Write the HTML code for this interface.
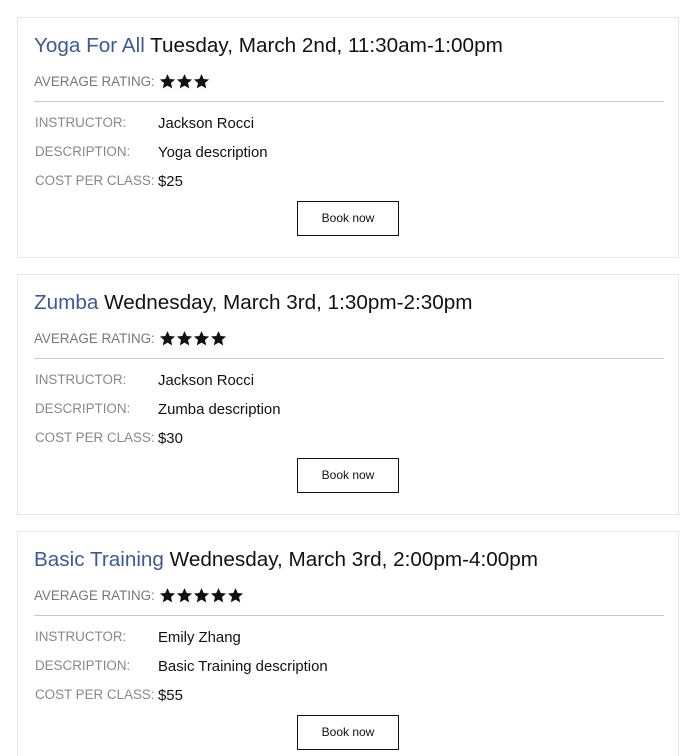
<!DOCTYPE html>
<html><head><meta charset="utf-8"><style>
*{margin:0;padding:0;box-sizing:border-box}
html,body{width:695px;height:756px;overflow:hidden}
body{background:#fff;font-family:"Liberation Sans",Arial,sans-serif;position:relative}
.card{position:absolute;left:17px;width:662px;height:241px;border:1px solid #e6e6e6}
.t{position:absolute;left:16px;top:16px;font-size:20.7px;color:#111;white-space:nowrap}
.t span{color:#3d5a98}
.r{position:absolute;left:16px;top:55px;font-size:13.4px;color:#777;display:flex;align-items:center}
.r svg{margin-left:4px}
.hr{position:absolute;left:16px;width:630px;top:83px;border-top:1px solid #c8c8c8}
.l{position:absolute;left:17px;font-size:13.4px;color:#888}
.v{position:absolute;left:140px;font-size:14.9px;color:#111}
.b{position:absolute;left:279px;top:183px;width:102px;height:35px;border:1px solid #111;font-size:12px;color:#111;text-align:center;line-height:33px}
</style></head><body>

<svg width="0" height="0" style="position:absolute"><defs><symbol id="s" viewBox="0 0 24 24"><path d="M12 1.5l3.1 7 7.6.7-5.8 5 1.8 7.5L12 17.8l-6.7 3.9 1.8-7.5-5.8-5 7.6-.7z" fill="#111"/></symbol></defs></svg>

<div class="card" style="top:17px">
<div class="t"><span>Yoga For All</span> Tuesday, March 2nd, 11:30am-1:00pm</div>
<div class="r">AVERAGE RATING:<svg width="51" height="17"><use href="#s" x="0" width="17" height="17"/><use href="#s" x="17" width="17" height="17"/><use href="#s" x="34" width="17" height="17"/></svg></div>
<div class="hr"></div>
<div class="l" style="top:97px">INSTRUCTOR:</div><div class="v" style="top:98px">Jackson Rocci</div>
<div class="l" style="top:126px">DESCRIPTION:</div><div class="v" style="top:127px">Yoga description</div>
<div class="l" style="top:155px">COST PER CLASS:</div><div class="v" style="top:156px">$25</div>
<div class="b">Book now</div>
</div>

<div class="card" style="top:274px">
<div class="t"><span>Zumba</span> Wednesday, March 3rd, 1:30pm-2:30pm</div>
<div class="r">AVERAGE RATING:<svg width="68" height="17"><use href="#s" x="0" width="17" height="17"/><use href="#s" x="17" width="17" height="17"/><use href="#s" x="34" width="17" height="17"/><use href="#s" x="51" width="17" height="17"/></svg></div>
<div class="hr"></div>
<div class="l" style="top:97px">INSTRUCTOR:</div><div class="v" style="top:98px">Jackson Rocci</div>
<div class="l" style="top:126px">DESCRIPTION:</div><div class="v" style="top:127px">Zumba description</div>
<div class="l" style="top:155px">COST PER CLASS:</div><div class="v" style="top:156px">$30</div>
<div class="b">Book now</div>
</div>

<div class="card" style="top:531px">
<div class="t"><span>Basic Training</span> Wednesday, March 3rd, 2:00pm-4:00pm</div>
<div class="r">AVERAGE RATING:<svg width="85" height="17"><use href="#s" x="0" width="17" height="17"/><use href="#s" x="17" width="17" height="17"/><use href="#s" x="34" width="17" height="17"/><use href="#s" x="51" width="17" height="17"/><use href="#s" x="68" width="17" height="17"/></svg></div>
<div class="hr"></div>
<div class="l" style="top:97px">INSTRUCTOR:</div><div class="v" style="top:98px">Emily Zhang</div>
<div class="l" style="top:126px">DESCRIPTION:</div><div class="v" style="top:127px">Basic Training description</div>
<div class="l" style="top:155px">COST PER CLASS:</div><div class="v" style="top:156px">$55</div>
<div class="b">Book now</div>
</div>

</body></html>
